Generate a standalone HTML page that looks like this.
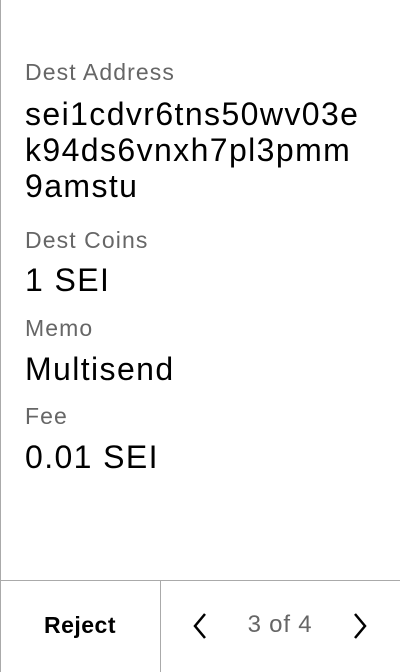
<!DOCTYPE html>
<html><head><style>
body{margin:0;width:400px;height:672px;position:relative;background:#fff;font-family:"Liberation Sans",sans-serif;overflow:hidden}
.b{position:absolute;left:0;top:0;width:1px;height:672px;background:#aaa}
.l{position:absolute;left:25px;font-size:23px;line-height:22px;color:#666;letter-spacing:1.1px}
.v{position:absolute;left:25px;font-size:32px;line-height:36px;color:#000;letter-spacing:1.4px;white-space:nowrap}
</style></head><body>
<div class="b"></div>
<div class="l" style="top:61px">Dest Address</div>
<div class="v" style="top:96px">sei1cdvr6tns50wv03e<br>k94ds6vnxh7pl3pmm<br>9amstu</div>
<div class="l" style="top:229px">Dest Coins</div>
<div class="v" style="top:262px">1 SEI</div>
<div class="l" style="top:317px">Memo</div>
<div class="v" style="top:351px">Multisend</div>
<div class="l" style="top:405px">Fee</div>
<div class="v" style="top:439px">0.01 SEI</div>
<div style="position:absolute;left:0;top:580px;width:400px;height:1px;background:#aaa"></div>
<div style="position:absolute;left:160px;top:580px;width:1px;height:92px;background:#aaa"></div>
<div style="position:absolute;left:0;top:612px;width:160px;text-align:center;font-size:23px;line-height:26px;font-weight:bold;letter-spacing:0.5px">Reject</div>
<div style="position:absolute;left:230px;top:612px;width:100px;text-align:center;font-size:24px;line-height:26px;color:#666;letter-spacing:0.8px">3 of 4</div>
<svg style="position:absolute;left:188px;top:610px" width="24" height="32"><path d="M17 4 L7 16 L17 28" fill="none" stroke="#000" stroke-width="2.5"/></svg>
<svg style="position:absolute;left:348px;top:610px" width="24" height="32"><path d="M7 4 L17 16 L7 28" fill="none" stroke="#000" stroke-width="2.5"/></svg>
</body></html>
